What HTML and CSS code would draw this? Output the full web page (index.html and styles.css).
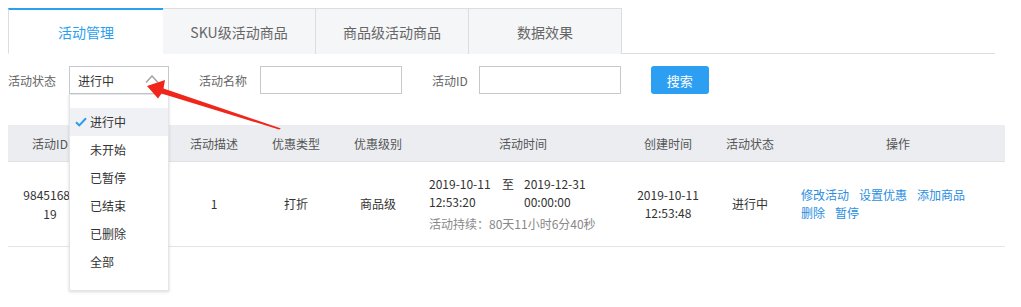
FILE: index.html
```html
<!DOCTYPE html>
<html lang="zh-CN">
<head>
    <meta charset="UTF-8">
    <title>活动管理</title>
    <link rel="stylesheet" href="styles.css">
</head>
<body>
    <div class="page">
        <div class="tabs">
            <div class="tab active">活动管理</div>
            <div class="tab">SKU级活动商品</div>
            <div class="tab">商品级活动商品</div>
            <div class="tab">数据效果</div>
        </div>

        <div class="filters">
            <div class="field">
                <label>活动状态</label>
                <div class="select">
                    <span>进行中</span>
                    <svg class="chevron" width="14" height="8" viewBox="0 0 14 8">
                        <polyline points="1,7.5 7,1 13,7.5" fill="none" stroke="#9a9a9a" stroke-width="1.2"/>
                    </svg>
                </div>
            </div>
            <div class="field">
                <label>活动名称</label>
                <input type="text" class="text-input">
            </div>
            <div class="field field-id">
                <label>活动ID</label>
                <input type="text" class="text-input">
            </div>
            <button class="btn-search">搜索</button>
        </div>

        <table class="list">
            <colgroup>
                <col style="width: 84px">
                <col style="width: 81px">
                <col style="width: 82px">
                <col style="width: 82px">
                <col style="width: 82px">
                <col style="width: 208px">
                <col style="width: 82px">
                <col style="width: 82px">
                <col style="width: 214px">
            </colgroup>
            <thead>
                <tr>
                    <th>活动ID</th>
                    <th></th>
                    <th>活动描述</th>
                    <th>优惠类型</th>
                    <th>优惠级别</th>
                    <th>活动时间</th>
                    <th>创建时间</th>
                    <th>活动状态</th>
                    <th>操作</th>
                </tr>
            </thead>
            <tbody>
                <tr>
                    <td class="id-cell">9845168119</td>
                    <td></td>
                    <td>1</td>
                    <td>打折</td>
                    <td>商品级</td>
                    <td class="left">
                        <div class="time-grid">
                            <span>2019-10-11</span><span>至</span><span>2019-12-31</span>
                            <span>12:53:20</span><span></span><span>00:00:00</span>
                        </div>
                        <div class="duration">活动持续：80天11小时6分40秒</div>
                    </td>
                    <td class="two-line">2019-10-11<br>12:53:48</td>
                    <td>进行中</td>
                    <td class="left ops">
                        <div><a>修改活动</a><a>设置优惠</a><a>添加商品</a></div>
                        <div><a>删除</a><a>暂停</a></div>
                    </td>
                </tr>
            </tbody>
        </table>

        <ul class="dropdown">
            <li class="selected">
                <svg class="check" width="12" height="10" viewBox="0 0 12 10">
                    <polyline points="1,5.2 4.3,8.4 11,1.2" fill="none" stroke="#2b9bf0" stroke-width="2"/>
                </svg>
                进行中
            </li>
            <li>未开始</li>
            <li>已暂停</li>
            <li>已结束</li>
            <li>已删除</li>
            <li>全部</li>
        </ul>

        <svg class="arrow" width="1021" height="307" viewBox="0 0 1021 307">
            <polygon points="147,86 165,80 163.5,88.5 281,128.5 279,129.5 161.5,93.5 158,98.5" fill="#f0261b"/>
        </svg>
    </div>
</body>
</html>
```

FILE: styles.css
```css
body {
    margin: 0;
    font-family: "Noto Sans CJK SC", "Noto Sans", sans-serif;
    font-size: 12px;
    color: #333;
    background-color: #fff;
}
.page {
    position: relative;
    width: 1021px;
    height: 307px;
    padding: 8px;
    box-sizing: border-box;
    overflow: hidden;
}
.tabs {
    display: flex;
    width: 987px;
    height: 46px;
    border-bottom: 1px solid #dcdde1;
    box-sizing: border-box;
}
.tab {
    width: 153px;
    height: 46px;
    display: flex;
    align-items: center;
    justify-content: center;
    box-sizing: border-box;
    font-size: 14px;
    color: #666;
    background-color: #f5f6f8;
    border-top: 1px solid #dcdde1;
    border-right: 1px solid #dcdde1;
}
.tab.active {
    width: 155px;
    color: #2a9ff0;
    background-color: #fff;
    border-top: 2px solid #2a9ff0;
    border-left: 1px solid #dcdde1;
    border-right: none;
    border-bottom: 1px solid #fff;
}
.filters {
    display: flex;
    align-items: center;
    gap: 30px;
    margin-top: 12px;
    height: 28px;
}
.field {
    display: flex;
    align-items: center;
    gap: 13px;
}
.field-id {
    gap: 11px;
}
.field label {
    color: #666;
}
.select {
    width: 100px;
    height: 28px;
    box-sizing: border-box;
    border: 1px solid #c8c9cc;
    display: flex;
    align-items: center;
    justify-content: space-between;
    padding: 0 9px 0 8px;
    color: #333;
}
.chevron {
    margin-top: -3px;
}
.text-input {
    width: 142px;
    height: 28px;
    box-sizing: border-box;
    border: 1px solid #c8c9cc;
    margin: 0;
    padding: 0 8px;
    outline: none;
}
.btn-search {
    width: 58px;
    height: 28px;
    border: none;
    border-radius: 3px;
    background-color: #2d9ff2;
    color: #fff;
    font-family: inherit;
    font-size: 13px;
    padding: 0;
}
.list {
    margin-top: 31px;
    width: 997px;
    table-layout: fixed;
    border-collapse: collapse;
}
.list th {
    height: 36px;
    padding: 0;
    background-color: #ebedf1;
    font-weight: normal;
    color: #555;
    text-align: center;
    border-bottom: 1px solid #dfe1e5;
}
.list td {
    height: 84px;
    padding: 0;
    text-align: center;
    vertical-align: middle;
    border-bottom: 1px solid #e3e4e8;
    line-height: 18px;
}
.list td.left {
    text-align: left;
    padding-left: 10px;
}
.id-cell {
    word-break: break-all;
    padding: 0 13px !important;
    line-height: 19px !important;
}
.time-grid {
    display: grid;
    grid-template-columns: 73px 22px auto;
    color: #333;
}
.duration {
    margin-top: 4px;
    color: #888;
}
.ops a {
    color: #2a8ee0;
    margin-right: 10px;
    cursor: pointer;
}
.dropdown {
    position: absolute;
    left: 69px;
    top: 94px;
    width: 100px;
    margin: 0;
    padding: 13px 0 14px;
    list-style: none;
    background-color: #fff;
    border: 1px solid #e4e5e8;
    box-sizing: border-box;
    box-shadow: 0 1px 3px rgba(0, 0, 0, 0.15);
}
.dropdown li {
    height: 28px;
    line-height: 28px;
    padding-left: 20px;
    position: relative;
    color: #333;
}
.dropdown li.selected {
    background-color: #f0f1f4;
}
.check {
    position: absolute;
    left: 5px;
    top: 9px;
}
.arrow {
    position: absolute;
    left: 0;
    top: 0;
    pointer-events: none;
}
```
